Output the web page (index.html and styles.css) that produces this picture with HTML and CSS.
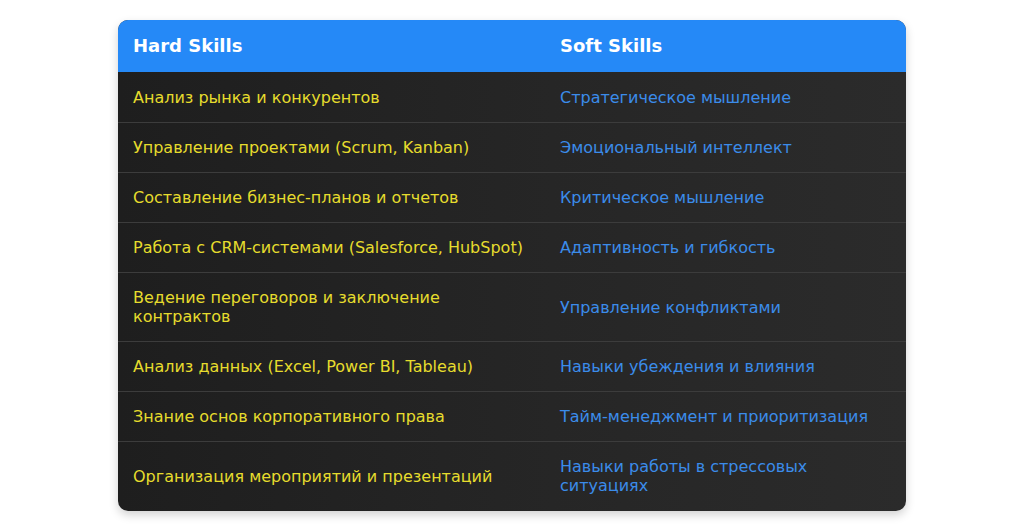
FILE: index.html
```html
<!DOCTYPE html>
<html lang="ru">
<head>
<meta charset="utf-8">
<link rel="stylesheet" href="styles.css">
</head>
<body>
<div class="wrap">
  <table class="skills">
    <thead>
      <tr><th class="c1">Hard Skills</th><th class="c2">Soft Skills</th></tr>
    </thead>
    <tbody>
      <tr><td class="hard">Анализ рынка и конкурентов</td><td class="soft">Стратегическое мышление</td></tr>
      <tr><td class="hard">Управление проектами (Scrum, Kanban)</td><td class="soft">Эмоциональный интеллект</td></tr>
      <tr><td class="hard">Составление бизнес-планов и отчетов</td><td class="soft">Критическое мышление</td></tr>
      <tr><td class="hard">Работа с CRM-системами (Salesforce, HubSpot)</td><td class="soft">Адаптивность и гибкость</td></tr>
      <tr><td class="hard">Ведение переговоров и заключение<br>контрактов</td><td class="soft">Управление конфликтами</td></tr>
      <tr><td class="hard">Анализ данных (Excel, Power BI, Tableau)</td><td class="soft">Навыки убеждения и влияния</td></tr>
      <tr><td class="hard">Знание основ корпоративного права</td><td class="soft">Тайм-менеджмент и приоритизация</td></tr>
      <tr><td class="hard">Организация мероприятий и презентаций</td><td class="soft">Навыки работы в стрессовых<br>ситуациях</td></tr>
    </tbody>
  </table>
</div>
</body>
</html>
```

FILE: styles.css
```css
* { box-sizing: border-box; }
html, body { margin: 0; padding: 0; background: #ffffff; }
body { font-family: "DejaVu Sans", sans-serif; }
.wrap { padding: 20px 118px; }
.skills {
  width: 788px;
  border-collapse: separate;
  border-spacing: 0;
  border-radius: 10px;
  overflow: hidden;
  background: linear-gradient(90deg, #1e1e1e 0%, #262626 55%, #2b2b2b 100%);
  box-shadow: 0 4px 10px rgba(0,0,0,0.18);
}
.skills th {
  background: #2589f7;
  color: #ffffff;
  font-weight: bold;
  font-size: 18px;
  line-height: 20px;
  text-align: left;
  padding: 16px 15px;
}
.skills th.c1 { width: 427px; }
.skills td {
  font-size: 16px;
  line-height: 19px;
  padding: 15px;
  border-top: 1px solid #3c3c3c;
  vertical-align: middle;
}
.skills tbody tr:first-child td { border-top: none; padding-top: 16px; }
.skills tbody tr:last-child td { padding-bottom: 16px; }
.hard { color: #e6dc2d; }
.soft { color: #3b8cea; }
```
